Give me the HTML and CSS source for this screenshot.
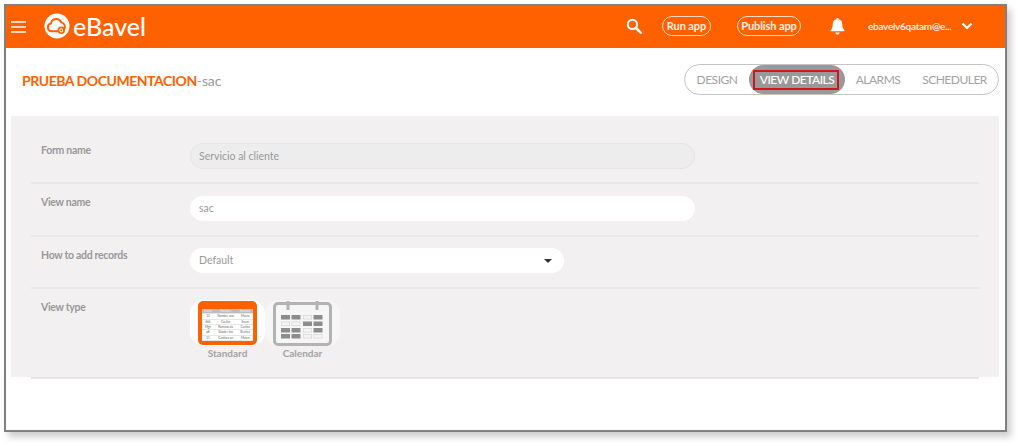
FILE: index.html
```html
<!DOCTYPE html>
<html lang="en">

<head>
    <meta charset="UTF-8" />
    <title>eBavel</title>
    <link rel="stylesheet" href="styles.css">
</head>

<body>

    <div class="frame">
        <header class="topbar">
            <button class="menu-btn" title="Menu"><span></span><span></span><span></span></button>
            <svg class="logo" width="26" height="26" viewBox="0 0 26 26">
                <circle cx="13" cy="13" r="12.5" fill="#fff" />
                <path d="M7.5 18.2a3.900 3.900 0 0 1-.6-7.700 5.400 5.400 0 0 1 10.300-1.200 4.500 4.500 0 0 1 2.600 7.400" fill="none" stroke="#ff6000" stroke-width="1.900" stroke-linecap="round" />
                <path d="M7.500 18.200h7" fill="none" stroke="#ff6000" stroke-width="1.900" stroke-linecap="round" />
                <circle cx="17.300" cy="17.300" r="2.900" fill="none" stroke="#ff6000" stroke-width="1.600" />
                <circle cx="17.300" cy="17.300" r="1" fill="#ff6000" />
            </svg>
            <span class="brand">eBavel</span>

            <div class="topbar-right">
                <svg class="icon-search" width="16" height="16" viewBox="0 0 16 16">
                    <circle cx="6.400" cy="6.400" r="4.600" fill="none" stroke="#fff" stroke-width="2.100" />
                    <path d="M10 10l4.600 4.600" stroke="#fff" stroke-width="2.600" stroke-linecap="round" />
                </svg>
                <a class="pill-btn run-btn">Run app</a>
                <a class="pill-btn publish-btn">Publish app</a>
                <svg class="icon-bell" width="15" height="18" viewBox="0 0 15 18">
                    <path d="M7.500 1a1.200 1.200 0 0 1 1.200 1.300c2.400.6 3.600 2.600 3.600 5 0 3 .6 4.400 2.200 6v.9H.5v-.9c1.600-1.600 2.200-3 2.200-6 0-2.400 1.200-4.400 3.600-5A1.200 1.200 0 0 1 7.500 1z" fill="#fff" />
                    <path d="M5.400 15.600h4.200a2.100 2.100 0 0 1-4.200 0z" fill="#fff" />
                </svg>
                <span class="user-name">ebavelv6qatam@e...</span>
                <svg class="icon-chevron" width="12" height="8" viewBox="0 0 12 8">
                    <path d="M1.500 1.500L6 6l4.500-4.500" fill="none" stroke="#fff" stroke-width="2.200" />
                </svg>
            </div>
        </header>

        <div class="title-row">
            <h1 class="title"><span class="title-main">PRUEBA DOCUMENTACION</span><span class="title-sub">-sac</span></h1>
            <nav class="tabs">
                <a class="tab tab-design">DESIGN</a>
                <a class="tab tab-details active">VIEW DETAILS</a>
                <a class="tab tab-alarms">ALARMS</a>
                <a class="tab tab-scheduler">SCHEDULER</a>
            </nav>
        </div>

        <section class="panel">
            <div class="row row-form">
                <label class="row-label">Form name</label>
                <div class="field field-disabled">Servicio al cliente</div>
            </div>
            <div class="row row-view">
                <label class="row-label">View name</label>
                <div class="field">sac</div>
            </div>
            <div class="row row-add">
                <label class="row-label">How to add records</label>
                <div class="field field-select">Default<span class="caret"></span></div>
            </div>
            <div class="row row-type">
                <label class="row-label">View type</label>
                <div class="types">
                    <div class="type">
                        <div class="type-thumb">
                            <div class="standard-icon">
                                <table class="mini-table">
                                    <tr class="mini-head"><td>Status</td><td>Nombre</td><td>Nombre</td></tr>
                                    <tr><td>12</td><td>Nombre ano</td><td>Marzo</td></tr>
                                    <tr><td>466</td><td>Cuellas</td><td>Enero</td></tr>
                                    <tr><td>Mgh</td><td>Romano da</td><td>Curitas</td></tr>
                                    <tr><td>p8</td><td>Slander has</td><td>Benitez</td></tr>
                                    <tr><td>11</td><td>Cardoza on</td><td>Mateo</td></tr>
                                </table>
                            </div>
                        </div>
                        <span class="type-name">Standard</span>
                    </div>
                    <div class="type">
                        <div class="type-thumb type-thumb-off">
                            <svg width="59" height="45" viewBox="0 0 59 45">
                                <rect x="1.500" y="2.500" width="56" height="41" rx="3.500" fill="none" stroke="#b3b3b3" stroke-width="3" />
                                <path d="M15 0v9M44 0v9" stroke="#b3b3b3" stroke-width="3" />
                                <g fill="#8c8c8c">
                                    <rect x="8" y="14" width="9" height="4.500" /><rect x="18.500" y="14" width="9" height="4.500" /><rect x="40.500" y="14" width="9" height="4.500" />
                                    <rect x="30" y="20.500" width="9" height="4.500" /><rect x="40.500" y="20.500" width="9" height="4.500" />
                                    <rect x="8" y="27" width="9" height="4.500" /><rect x="18.500" y="27" width="9" height="4.500" /><rect x="40.500" y="27" width="9" height="4.500" />
                                    <rect x="8" y="33" width="9" height="4.500" /><rect x="18.500" y="33" width="9" height="4.500" />
                                </g>
                                <g fill="#f4f4f4" stroke="#d9d9d9" stroke-width="0.800">
                                    <rect x="30.400" y="14.400" width="8.200" height="3.700" />
                                    <rect x="8.400" y="20.900" width="8.200" height="3.700" /><rect x="18.900" y="20.900" width="8.200" height="3.700" />
                                    <rect x="30.400" y="27.400" width="8.200" height="3.700" />
                                    <rect x="30.400" y="33.400" width="8.200" height="3.700" /><rect x="40.900" y="33.400" width="8.200" height="3.700" />
                                </g>
                            </svg>
                        </div>
                        <span class="type-name">Calendar</span>
                    </div>
                </div>
            </div>
        </section>
    </div>

</body>

</html>
```

FILE: styles.css
```css
html,
body {
    margin: 0;
    padding: 0;
    height: 100%;
    background: #fff;
}

body {
    font-family: Lato, "Open Sans", sans-serif;
    color: #999;
    padding: 4px 0 0 4px;
    box-sizing: border-box;
    overflow: hidden;
}

.frame {
    width: 1003px;
    height: 428px;
    box-sizing: border-box;
    border: 2px solid #808080;
    box-shadow: 4px 5px 7px rgba(0, 0, 0, 0.2);
    background: #fff;
}

/* barra superior */
.topbar {
    height: 42px;
    background: #ff6000;
    display: flex;
    align-items: center;
    color: #fff;
}

.menu-btn {
    width: 15px;
    margin-left: 5px;
    padding: 0;
    background: none;
    border: none;
    display: flex;
    flex-direction: column;
    gap: 3px;
}

.menu-btn span {
    height: 2px;
    background: #ffd5bb;
}

.logo {
    margin-left: 18px;
    margin-top: -2px;
}

.brand {
    margin-left: 3px;
    margin-top: -2px;
    font-size: 25px;
    font-weight: 500;
}

.topbar-right {
    margin-left: auto;
    display: flex;
    align-items: center;
    margin-top: -2px;
}

.pill-btn {
    height: 20px;
    line-height: 18px;
    box-sizing: border-box;
    border: 1px solid #ffd9c2;
    border-radius: 10px;
    font-size: 11px;
    font-weight: 700;
    letter-spacing: -0.100px;
    color: #fff0e6;
    text-align: center;
}

.run-btn {
    width: 49px;
    margin-left: 20px;
}

.publish-btn {
    width: 64px;
    margin-left: 26px;
}

.icon-bell {
    margin-left: 29px;
}

.user-name {
    margin-left: 23px;
    font-size: 10px;
    font-weight: 700;
    letter-spacing: -0.300px;
    color: #ffe9dc;
    width: 93px;
    white-space: nowrap;
}

.icon-chevron {
    margin-right: 32px;
}

/* titulo y pestañas */
.title-row {
    height: 68px;
    display: flex;
    align-items: center;
    justify-content: space-between;
    padding: 0 6px 5px 16px;
    box-sizing: border-box;
}

.title {
    margin: 1px 0 0;
    font-size: 14px;
    font-weight: 700;
    letter-spacing: -0.450px;
}

.title-main {
    color: #ff6000;
}

.title-sub {
    color: #999;
    font-weight: 400;
    letter-spacing: -0.100px;
}

.tabs {
    display: flex;
    align-items: center;
    width: 315px;
    height: 31px;
    box-sizing: border-box;
    border: 1px solid #c4c4c4;
    border-radius: 16px;
    font-size: 12px;
    letter-spacing: -0.500px;
    color: #a3a3a3;
}

.tab {
    white-space: nowrap;
    text-align: center;
}

.tab-design {
    width: 64px;
}

.tab-details {
    width: 96px;
}

.tab-alarms {
    width: 66px;
}

.tab-scheduler {
    width: 87px;
}

.tab.active {
    height: 29px;
    line-height: 29px;
    background: #999;
    color: #fff;
    font-weight: 500;
    border-radius: 15px;
    position: relative;
}

/* recuadro rojo de la captura */
.tab.active::after {
    content: "";
    position: absolute;
    left: 4px;
    right: 6px;
    top: 5px;
    bottom: 4px;
    border: 2px solid #d4141c;
}

/* formulario */
.panel {
    margin-left: 5px;
    width: 988px;
    height: 261px;
    background: #f2f0f1;
    box-sizing: border-box;
    padding: 0 20px;
}

.row {
    display: flex;
    box-sizing: border-box;
    padding-left: 10px;
    border-bottom: 2px solid #e9e8e8;
}

.row-form {
    height: 68px;
    padding-top: 27px;
}

.row-view {
    height: 53px;
    padding-top: 12px;
}

.row-add {
    height: 52px;
    padding-top: 11px;
}

.row-type {
    height: 90px;
    padding-top: 11px;
}

.row-label {
    width: 149px;
    padding-top: 1px;
    font-size: 10.500px;
    font-weight: 700;
    letter-spacing: -0.300px;
    color: #999;
}

.row-view .row-label {
    padding-top: 0;
}

.field {
    width: 505px;
    height: 25px;
    line-height: 24px;
    box-sizing: border-box;
    padding-left: 9px;
    border-radius: 13px;
    background: #fff;
    font-size: 10.500px;
    color: #999;
}

.field-disabled {
    height: 26px;
    background: #eeeded;
    border: 1px solid #e6e5e5;
    padding-left: 8px;
}

.field-select {
    width: 374px;
    position: relative;
}

.caret {
    position: absolute;
    right: 12px;
    top: 11px;
    border-left: 4px solid transparent;
    border-right: 4px solid transparent;
    border-top: 4px solid #333;
}

.types {
    display: flex;
}

.type {
    width: 75px;
    display: flex;
    flex-direction: column;
    align-items: center;
}

.type-thumb {
    width: 75px;
    height: 46px;
    display: flex;
    align-items: center;
    justify-content: center;
    background: #fff;
    border-radius: 14px;
}

.type-thumb-off {
    background: #f7f6f6;
}

.type-name {
    margin-top: 1px;
    font-size: 10px;
    font-weight: 700;
    color: #a3a3a3;
}

.standard-icon {
    width: 59px;
    height: 44px;
    box-sizing: border-box;
    background: #ff6000;
    border-radius: 5px;
    padding: 8px 4px 4px;
}

.mini-table {
    width: 100%;
    height: 100%;
    border-collapse: collapse;
    background: #fff;
    font-size: 3px;
    color: #666;
    text-align: center;
}

.mini-table td {
    padding: 0;
    border-bottom: 1px solid #e6e6e6;
    line-height: 4px;
}

.mini-head td {
    background: #bdbdbd;
    color: #eee;
}
```
